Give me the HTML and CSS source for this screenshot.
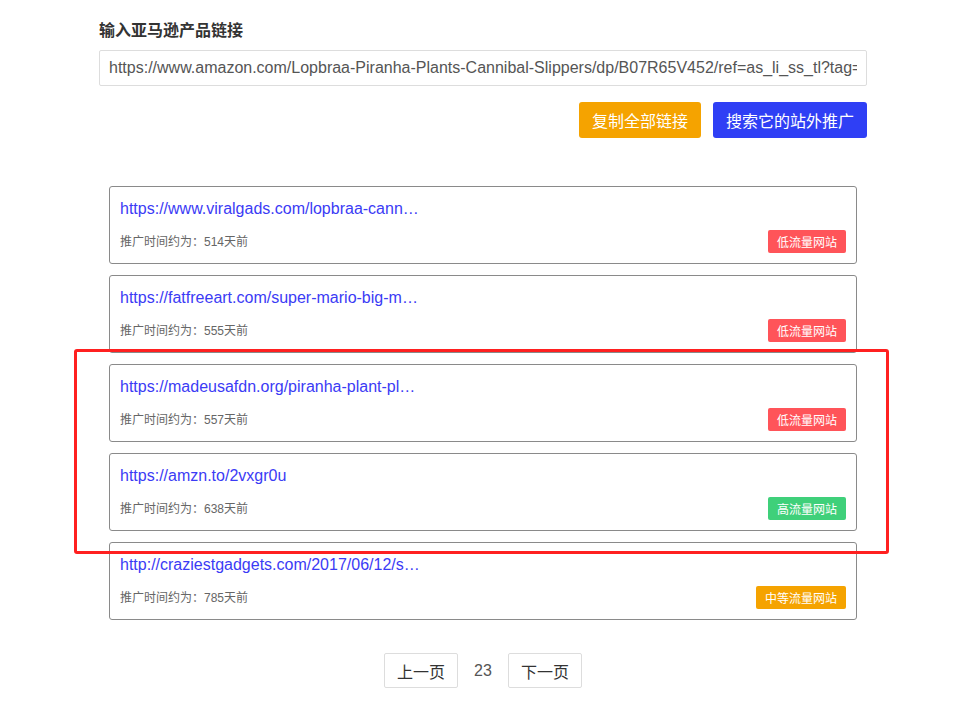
FILE: index.html
```html
<!DOCTYPE html>
<html lang="zh-CN">
<head>
<meta charset="utf-8">
<title>亚马逊产品站外推广</title>
<link rel="stylesheet" href="styles.css">
</head>
<body>
<div class="page">
  <h1 class="title">输入亚马逊产品链接</h1>
  <input class="url-input" type="text" value="https://www.amazon.com/Lopbraa-Piranha-Plants-Cannibal-Slippers/dp/B07R65V452/ref=as_li_ss_tl?tag=">
  <div class="actions">
    <button class="btn btn-orange">复制全部链接</button>
    <button class="btn btn-blue">搜索它的站外推广</button>
  </div>

  <ul class="results">
    <li class="card">
      <a class="link" href="#">https://www.viralgads.com/lopbraa-cannibal-slippers/</a>
      <div class="meta-row">
        <span class="meta">推广时间约为：514天前</span>
        <span class="badge badge-red">低流量网站</span>
      </div>
    </li>
    <li class="card">
      <a class="link" href="#">https://fatfreeart.com/super-mario-big-mouth-slippers/</a>
      <div class="meta-row">
        <span class="meta">推广时间约为：555天前</span>
        <span class="badge badge-red">低流量网站</span>
      </div>
    </li>
    <li class="card">
      <a class="link" href="#">https://madeusafdn.org/piranha-plant-p&#8203;lush-slippers/</a>
      <div class="meta-row">
        <span class="meta">推广时间约为：557天前</span>
        <span class="badge badge-red">低流量网站</span>
      </div>
    </li>
    <li class="card">
      <a class="link" href="#">https://amzn.to/2vxgr0u</a>
      <div class="meta-row">
        <span class="meta">推广时间约为：638天前</span>
        <span class="badge badge-green">高流量网站</span>
      </div>
    </li>
    <li class="card">
      <a class="link" href="#">http://craziestgadgets.com/2017/06/12/super-mario-slippers/</a>
      <div class="meta-row">
        <span class="meta">推广时间约为：785天前</span>
        <span class="badge badge-orange">中等流量网站</span>
      </div>
    </li>
  </ul>

  <div class="pager">
    <button class="pager-btn">上一页</button>
    <span class="pager-num">23</span>
    <button class="pager-btn">下一页</button>
  </div>
</div>
<div class="highlight"></div>
</body>
</html>
```

FILE: styles.css
```css
* {
  box-sizing: border-box;
}

html, body {
  margin: 0;
  padding: 0;
  background: #ffffff;
}

body {
  position: relative;
  width: 961px;
  min-height: 716px;
  font-family: "Liberation Sans", "Noto Sans CJK SC", sans-serif;
  color: #333333;
}

.page {
  width: 768px;
  margin-left: 99px;
  padding-top: 17px;
}

.title {
  margin: 0 0 9px 0;
  font-size: 16px;
  line-height: 24px;
  font-weight: bold;
  color: #333333;
  font-family: "Noto Sans CJK SC", "Liberation Sans", sans-serif;
}

.url-input {
  display: block;
  width: 768px;
  height: 36px;
  margin: 0;
  padding: 0 9px;
  border: 1px solid #dddddd;
  border-radius: 2px;
  font-family: "Liberation Sans", "Noto Sans CJK SC", sans-serif;
  font-size: 16px;
  color: #555555;
  background: #ffffff;
  outline: none;
}

.actions {
  display: flex;
  justify-content: flex-end;
  gap: 12px;
  margin-top: 16px;
}

.btn {
  height: 36px;
  padding: 0 13px;
  border: none;
  border-radius: 3px;
  font-family: "Noto Sans CJK SC", "Liberation Sans", sans-serif;
  font-size: 16px;
  line-height: 36px;
  color: #ffffff;
  cursor: pointer;
}

.btn-orange {
  background: #f5a300;
}

.btn-blue {
  background: #2f3ff5;
}

.results {
  list-style: none;
  margin: 48px 10px 0 10px;
  padding: 0;
  display: flex;
  flex-direction: column;
  gap: 11px;
}

.card {
  height: 78px;
  padding: 11px 10px 10px 10px;
  border: 1px solid #8a8a8a;
  border-radius: 3px;
  display: flex;
  flex-direction: column;
  gap: 10px;
}

.link {
  display: block;
  max-width: 300px;
  height: 22px;
  line-height: 22px;
  font-size: 16px;
  color: #3b3bf5;
  text-decoration: none;
  white-space: nowrap;
  overflow: hidden;
  text-overflow: ellipsis;
}

.meta-row {
  display: flex;
  align-items: center;
  justify-content: space-between;
  height: 23px;
}

.meta {
  font-size: 12px;
  line-height: 20px;
  color: #666666;
}

.badge {
  height: 23px;
  line-height: 23px;
  padding: 0 9px;
  border-radius: 2px;
  font-size: 12px;
  color: #ffffff;
  font-family: "Noto Sans CJK SC", "Liberation Sans", sans-serif;
}

.badge-red {
  background: #ff5459;
}

.badge-green {
  background: #3fd07a;
}

.badge-orange {
  background: #f5a300;
}

.pager {
  display: flex;
  justify-content: center;
  align-items: center;
  margin-top: 33px;
}

.pager-btn {
  height: 35px;
  padding: 0 12px;
  border: 1px solid #dddddd;
  border-radius: 2px;
  background: #ffffff;
  font-family: "Noto Sans CJK SC", "Liberation Sans", sans-serif;
  font-size: 16px;
  color: #333333;
}

.pager-num {
  width: 50px;
  text-align: center;
  font-size: 16px;
  color: #555555;
}

.highlight {
  position: absolute;
  left: 74px;
  top: 349px;
  width: 815px;
  height: 205px;
  border: 3px solid #ff2020;
  border-radius: 3px;
  pointer-events: none;
}
```
